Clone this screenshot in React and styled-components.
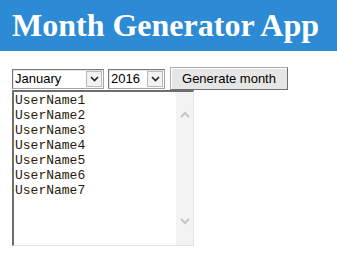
import React from "react";
import styled, { createGlobalStyle } from "styled-components";

const GlobalStyle = createGlobalStyle`
  body {
    margin: 0;
    background: #fff;
    font-family: "Liberation Sans", Arial, sans-serif;
  }
`;

const Header = styled.h1`
  margin: 0;
  padding: 7px 12px;
  background-color: #2c8bd4;
  color: #fff;
  font-family: "Liberation Serif", "Times New Roman", serif;
  font-size: 32px;
  font-weight: bold;
  line-height: 37px;
`;

const Main = styled.div`
  padding: 16px 12px 0;
`;

const Controls = styled.div`
  display: flex;
  align-items: center;
  height: 23px;
`;

const SelectBox = styled.div`
  display: flex;
  box-sizing: border-box;
  width: ${(p) => p.width}px;
  height: 20px;
  margin-right: ${(p) => p.gap || 0}px;
  border: 1px solid #a5a5a5;
  border-top-color: #7a7a7a;
  border-left-color: #7a7a7a;
  box-shadow: inset 1px 1px 0 #e3e3e3;
  background: #fff;
`;

const Select = styled.select`
  flex: 1;
  min-width: 0;
  appearance: none;
  border: none;
  outline: none;
  background: transparent;
  padding: 0 0 0 2px;
  margin: 0;
  font-family: "Liberation Sans", Arial, sans-serif;
  font-size: 13px;
  color: #000;
`;

const Arrow = styled.span`
  display: flex;
  align-items: center;
  justify-content: center;
  width: 16px;
  margin: 1px;
  box-sizing: border-box;
  border: 1px solid #b9b9b9;
  background: #f3f3f3;
`;

const Button = styled.button`
  box-sizing: border-box;
  width: 118px;
  height: 23px;
  padding: 0;
  border: 1px solid #adadad;
  border-right-color: #707070;
  border-bottom-color: #707070;
  background: #e6e6e6;
  box-shadow: inset 1px 1px 0 #fff;
  font-family: "Liberation Sans", Arial, sans-serif;
  font-size: 13px;
  color: #000;
`;

const Editor = styled.div`
  display: flex;
  box-sizing: border-box;
  width: 182px;
  height: 156px;
  border: 1px solid #e3e3e3;
  border-top: 2px solid #6e6e6e;
  border-left: 2px solid #6e6e6e;
  background: #fff;
`;

const TextArea = styled.textarea`
  flex: 1;
  min-width: 0;
  border: none;
  outline: none;
  resize: none;
  overflow: hidden;
  margin: 0;
  padding: 1px 1px;
  font-family: "Liberation Mono", "Courier New", monospace;
  font-size: 13px;
  line-height: 15px;
  color: #2a1a08;
`;

const Scrollbar = styled.div`
  display: flex;
  flex-direction: column;
  justify-content: space-between;
  align-items: center;
  width: 17px;
  padding: 19px 0 20px;
  background: #f3f3f3;
`;

const Chevron = ({ up }) => (
  <svg width="10" height="7" viewBox="0 0 10 7">
    <path
      d={up ? "M1 6 L5 2 L9 6" : "M1 1 L5 5 L9 1"}
      fill="none"
      stroke="#c4c4c4"
      strokeWidth="2"
    />
  </svg>
);

const SmallChevron = () => (
  <svg width="9" height="6" viewBox="0 0 9 6">
    <path d="M1 1 L4.5 4.5 L8 1" fill="none" stroke="#222" strokeWidth="1.6" />
  </svg>
);

const months = [
  "January", "February", "March", "April", "May", "June",
  "July", "August", "September", "October", "November", "December",
];

const users = Array.from({ length: 7 }, (_, i) => `UserName${i + 1}`).join("\n");

export default function App() {
  return (
    <>
      <GlobalStyle />
      <Header>Month Generator App</Header>
      <Main>
        <Controls>
          <SelectBox width={92} gap={4}>
            <Select defaultValue="January">
              {months.map((m) => (
                <option key={m}>{m}</option>
              ))}
            </Select>
            <Arrow>
              <SmallChevron />
            </Arrow>
          </SelectBox>
          <SelectBox width={57} gap={5}>
            <Select defaultValue="2016">
              <option>2015</option>
              <option>2016</option>
              <option>2017</option>
            </Select>
            <Arrow>
              <SmallChevron />
            </Arrow>
          </SelectBox>
          <Button>Generate month</Button>
        </Controls>
        <Editor>
          <TextArea defaultValue={users} spellCheck={false} />
          <Scrollbar>
            <Chevron up />
            <Chevron />
          </Scrollbar>
        </Editor>
      </Main>
    </>
  );
}
